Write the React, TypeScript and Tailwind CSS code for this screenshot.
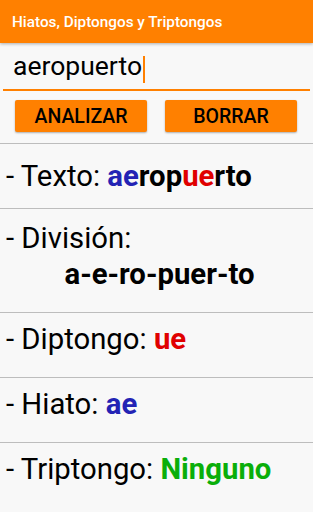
const font = { fontFamily: 'Roboto, "Liberation Sans", sans-serif' }

function Divider() {
  return <div className="h-px w-full bg-[#bdbdbd]" />
}

function Row({ children, className = '' }: { children: React.ReactNode; className?: string }) {
  return (
    <div className={`h-[64px] pl-[6px] text-[29.3px] leading-[35px] text-black ${className}`}>
      <p className="whitespace-nowrap">{children}</p>
    </div>
  )
}

function OrangeButton({ label }: { label: string }) {
  return (
    <button className="h-[32px] w-[132px] rounded-[2px] bg-[#ff8000] pt-[2px] text-[19.5px] font-medium text-black shadow-[0_1px_2px_rgba(0,0,0,0.3)]">
      {label}
    </button>
  )
}

export default function App() {
  return (
    <div className="h-[512px] w-[313px] overflow-hidden bg-[#f8f8f8]" style={font}>
      <header className="relative z-10 flex h-[43px] items-center bg-[#ff8000] pt-[2px] pl-[12px] shadow-[0_1px_3px_rgba(0,0,0,0.3)]">
        <h1 className="text-[15.3px] font-medium text-white">Hiatos, Diptongos y Triptongos</h1>
      </header>

      <div className="px-[3px] pt-[7px]">
        <div className="border-b-2 border-[#ff8000] pb-[6px] pl-[10px] text-[26.5px] leading-[31px] text-black">
          aeropuerto
          <span className="ml-px inline-block h-[27px] w-[2px] bg-[#ff8000] align-[-8px]" />
        </div>
      </div>

      <div className="flex gap-[18px] px-[15px] pt-[9px] pb-[11px]">
        <OrangeButton label="ANALIZAR" />
        <OrangeButton label="BORRAR" />
      </div>

      <Divider />
      <Row className="pt-[15px]">
        - Texto:{' '}
        <b className="font-bold">
          <span className="text-[#2323b4]">ae</span>rop<span className="text-[#e00000]">ue</span>rto
        </b>
      </Row>
      <Divider />
      <div className="h-[103px] pt-[11px] pl-[6px] text-[29.3px] leading-[36px] text-black">
        <p>- División:</p>
        <p className="text-center font-bold">a-e-ro-puer-to</p>
      </div>
      <Divider />
      <Row className="pt-[9px]">
        - Diptongo: <b className="font-bold text-[#e00000]">ue</b>
      </Row>
      <Divider />
      <Row className="pt-[9px]">
        - Hiato: <b className="font-bold text-[#2323b4]">ae</b>
      </Row>
      <Divider />
      <Row className="pt-[9px]">
        - Triptongo: <b className="font-bold text-[#0aae0a]">Ninguno</b>
      </Row>
    </div>
  )
}
